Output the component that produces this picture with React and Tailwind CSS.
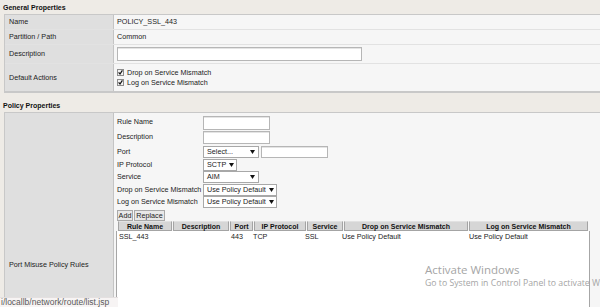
const Arrow = () => (
  <svg width="5" height="4" viewBox="0 0 5 4" className="shrink-0">
    <path d="M0 0h5L2.5 4z" fill="#111" />
  </svg>
);

const Check = () => (
  <svg width="7" height="7" viewBox="0 0 7 7" className="mr-[3px] shrink-0">
    <rect x="0.5" y="0.5" width="6" height="6" fill="#f2f2f2" stroke="#8c8c8c" />
    <path d="M1.6 3.4l1.4 1.6 2.4-3.6" stroke="#111" strokeWidth="1.2" fill="none" />
  </svg>
);

function Select({ w, text }) {
  return (
    <div className={`flex h-[12px] items-center justify-between gap-[3px] border border-[#a8a8a8] bg-white pl-[3px] pr-[3px] ${w}`}>
      <span className="whitespace-nowrap">{text}</span>
      <Arrow />
    </div>
  );
}

function Input({ w, h }) {
  return <div className={`border border-[#b6b6b6] bg-white shadow-[inset_0_1px_0_#e4e4e4] ${w} ${h}`} />;
}

function Row({ label, h, last, children }) {
  return (
    <div className={`grid grid-cols-[109px_1fr] ${h} ${last ? "" : "border-b border-[#e2e2e2]"}`}>
      <div className="flex items-center border-r border-[#c4c4c4] bg-[#dfdfdf] pl-[4px]">{label}</div>
      <div className="flex items-center bg-[#f6f6f6] pl-[3px]">{children}</div>
    </div>
  );
}

function Field({ label, h, children }) {
  return (
    <div className={`flex items-start ${h}`}>
      <div className="flex h-[12px] w-[86px] items-center">{label}</div>
      {children}
    </div>
  );
}

const headers = [
  ["Rule Name", "w-[54px]"],
  ["Description", "w-[56px]"],
  ["Port", "w-[23px]"],
  ["IP Protocol", "w-[52px]"],
  ["Service", "w-[36px]"],
  ["Drop on Service Mismatch", "w-[124px]"],
  ["Log on Service Mismatch", "w-[119px]"],
];

export default function App() {
  return (
    <div className="relative h-[307px] w-[600px] overflow-hidden bg-[#eeebe6] font-['Liberation_Sans',Arial,sans-serif] text-[7.2px] leading-none text-[#222]">
      <div className="flex h-[14px] items-center pl-[3px] pt-[1px] text-[7px] font-bold text-[#111]">General Properties</div>
      <div className="ml-[4px] border-t border-b-2 border-l border-[#c8c8c8]">
        <Row label="Name" h="h-[15px]">POLICY_SSL_443</Row>
        <Row label="Partition / Path" h="h-[15px]">Common</Row>
        <Row label="Description" h="h-[19px]">
          <Input w="w-[245px]" h="h-[14px]" />
        </Row>
        <Row label="Default Actions" h="h-[27px]" last>
          <div className="flex flex-col gap-[3px]">
            <div className="flex items-center">
              <Check />
              Drop on Service Mismatch
            </div>
            <div className="flex items-center">
              <Check />
              Log on Service Mismatch
            </div>
          </div>
        </Row>
      </div>

      <div className="flex h-[19px] items-end pb-[3px] pl-[3px] text-[7px] font-bold text-[#111]">Policy Properties</div>
      <div className="ml-[4px] grid h-[304px] grid-cols-[109px_1fr] border-t border-l border-[#c8c8c8]">
        <div className="flex items-center border-r border-[#c4c4c4] bg-[#dfdfdf] pl-[4px]">Port Misuse Policy Rules</div>
        <div className="flex flex-col bg-[#f6f6f6] pl-[3px] pt-[3px]">
          <Field label="Rule Name" h="h-[15px]">
            <Input w="w-[67px]" h="h-[14px]" />
          </Field>
          <Field label="Description" h="h-[15px]">
            <Input w="w-[67px]" h="h-[13px]" />
          </Field>
          <Field label="Port" h="h-[13px]">
            <Select w="w-[56px]" text="Select..." />
            <div className="ml-[2px]">
              <Input w="w-[67px]" h="h-[12px]" />
            </div>
          </Field>
          <Field label="IP Protocol" h="h-[12px]">
            <Select w="w-[34px]" text="SCTP" />
          </Field>
          <Field label="Service" h="h-[13px]">
            <Select w="w-[56px]" text="AIM" />
          </Field>
          <Field label="Drop on Service Mismatch" h="h-[12px]">
            <Select w="w-[74px]" text="Use Policy Default" />
          </Field>
          <Field label="Log on Service Mismatch" h="h-[14px]">
            <Select w="w-[74px]" text="Use Policy Default" />
          </Field>
          <div className="flex h-[11px] gap-[1px]">
            <div className="flex w-[16px] items-center justify-center border border-[#a9a9a9] bg-[#e8e8e8]">Add</div>
            <div className="flex w-[31px] items-center justify-center border border-[#a9a9a9] bg-[#e8e8e8]">Replace</div>
          </div>
          <div className="ml-[1px] flex h-[10px] gap-[1px] text-[7px] font-bold text-[#111]">
            {headers.map(([t, w]) => (
              <div key={t} className={`flex items-center justify-center border border-[#a4a4a4] border-t-[#e2e2e2] bg-[#d6d6d6] ${w}`}>
                {t}
              </div>
            ))}
          </div>
          <div className="-ml-[1px] w-[474px] flex-1 border-x border-[#a6a6a6] bg-white">
            <div className="flex h-[12px] items-center pl-[2px]">
              <span className="w-[112px]">SSL_443</span>
              <span className="w-[22px]">443</span>
              <span className="w-[52px]">TCP</span>
              <span className="w-[37px]">SSL</span>
              <span className="w-[127px]">Use Policy Default</span>
              <span>Use Policy Default</span>
            </div>
          </div>
        </div>
      </div>

      <div className="absolute left-[425px] top-[263px] whitespace-nowrap font-['Open_Sans',sans-serif] text-[#a5a5a5]">
        <div className="text-[11.5px] leading-[14px]">Activate Windows</div>
        <div className="text-[8.7px] leading-[12px]">Go to System in Control Panel to activate Windows.</div>
      </div>

      <div className="absolute bottom-0 left-0 flex h-[10px] w-[118px] items-center border-t border-[#e4e0e0] bg-[#f7f4f4] pl-[1px] text-[8.5px] text-[#5a5a5a]">
        i/locallb/network/route/list.jsp
      </div>
    </div>
  );
}
